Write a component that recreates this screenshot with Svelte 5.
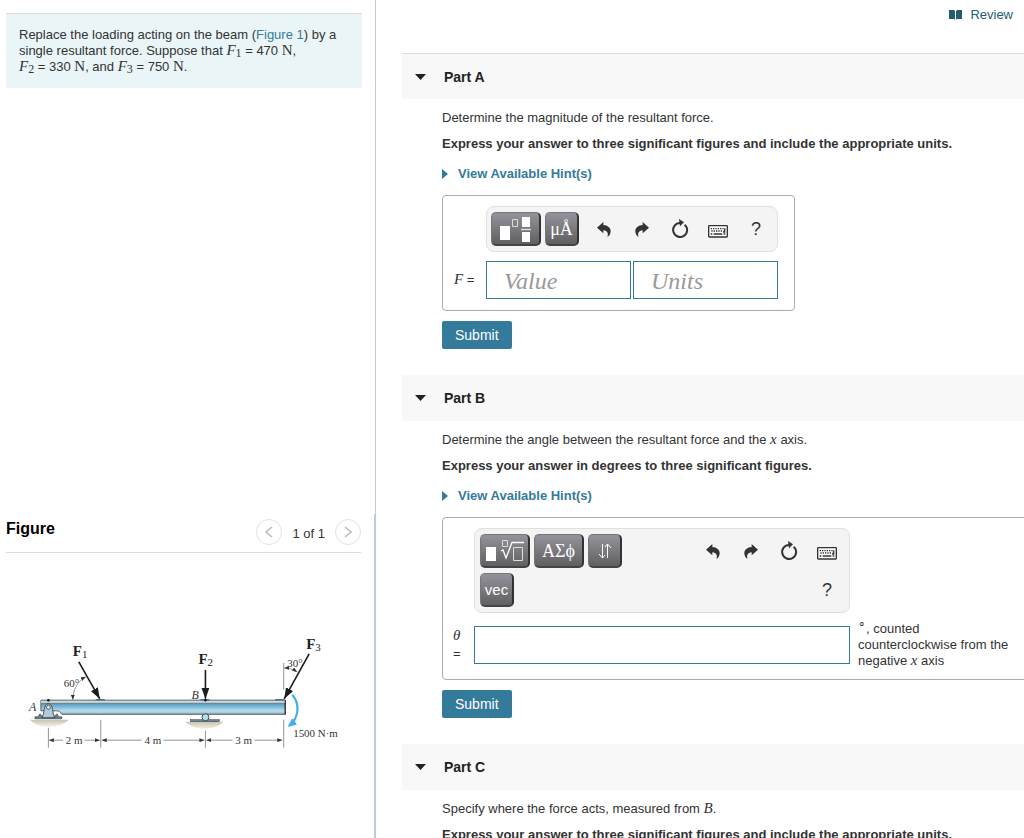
<script lang="ts">
	let value = $state('');
	let units = $state('');
	let theta = $state('');

	let open = $state({ a: true, b: true, c: true });

	type PartKey = 'a' | 'b' | 'c';
</script>

{#snippet undoIcon()}
	<svg width="14" height="15" viewBox="0 0 42 45" aria-hidden="true">
		<path d="M0 17 19 0V9C32 10 41 17 41 28C41 36 37 42 31 45C35 35 32 26 19 25V34Z" fill="#333" />
	</svg>
{/snippet}

{#snippet redoIcon()}
	<svg width="14" height="15" viewBox="0 0 42 45" aria-hidden="true">
		<path d="M42 17 23 0V9C10 10 1 17 1 28C1 36 5 42 11 45C7 35 10 26 23 25V34Z" fill="#333" />
	</svg>
{/snippet}

{#snippet resetIcon()}
	<svg width="18" height="20" viewBox="0 0 54 60" aria-hidden="true">
		<path d="M41 17A21 21 0 1 1 28 12" fill="none" stroke="#333" stroke-width="6" />
		<path d="M24 0 39 10 27 22Z" fill="#333" />
	</svg>
{/snippet}

{#snippet keyboardIcon()}
	<svg width="20" height="13" viewBox="0 0 60 39" aria-hidden="true">
		<rect x="2" y="2" width="56" height="34" rx="2" fill="#fff" stroke="#333" stroke-width="4" />
		<path d="M8 11H52M10 18H46" stroke="#333" stroke-width="4" stroke-dasharray="4 3" />
		<path d="M8 27H13M17 27H43M47 27H52M50 11V21H45" stroke="#333" stroke-width="4" fill="none" />
	</svg>
{/snippet}

{#snippet editIcons()}
	<div class="edit-icons">
		<button class="icon" aria-label="Undo">{@render undoIcon()}</button>
		<button class="icon" aria-label="Redo">{@render redoIcon()}</button>
		<button class="icon" aria-label="Reset">{@render resetIcon()}</button>
		<button class="icon low" aria-label="Keyboard shortcuts">{@render keyboardIcon()}</button>
		<button class="icon help">?</button>
	</div>
{/snippet}

{#snippet partHeader(key: PartKey, title: string)}
	<h2>
		<button class="part-toggle" aria-expanded={open[key]} onclick={() => (open[key] = !open[key])}>
			<svg class:closed={!open[key]} width="11" height="6" viewBox="0 0 11 6" aria-hidden="true">
				<path d="M0 0H11L5.500 6Z" fill="#222" />
			</svg>
			{title}
		</button>
	</h2>
{/snippet}

{#snippet hints()}
	<button class="hints">
		<svg width="6" height="10" viewBox="0 0 6 10" aria-hidden="true">
			<path d="M0 0 6 5 0 10Z" fill="#347a9b" />
		</svg>
		View Available Hint(s)
	</button>
{/snippet}

{#snippet force(index: number, newtons: number)}
	<span class="formula"><span class="math"><i>F</i><sub>{index}</sub></span> = {newtons} <span class="math">N</span></span>
{/snippet}

<div class="page">
	<aside>
		<section class="problem">
			<div class="prompt">
				Replace the loading acting on the beam (<a href="#figure">Figure 1</a>) by a single resultant
				force. Suppose that {@render force(1, 470)}, {@render force(2, 330)}, and {@render force(3, 750)}.
			</div>
		</section>

		<section class="figure" id="figure">
			<header>
				<h3>Figure</h3>
				<nav>
					<button aria-label="Previous figure">
						<svg width="8" height="12" viewBox="0 0 8 12"><path d="M7 1 1 6 7 11" /></svg>
					</button>
					<span>1 of 1</span>
					<button aria-label="Next figure">
						<svg width="8" height="12" viewBox="0 0 8 12"><path d="M1 1 7 6 1 11" /></svg>
					</button>
				</nav>
			</header>

			<svg class="beam" viewBox="0 0 356 130" role="img" aria-label="Beam with three loads">
				<defs>
					<linearGradient id="steel" x1="0" y1="0" x2="0" y2="1">
						<stop offset="0" stop-color="#3d87ae" />
						<stop offset="0.3" stop-color="#5ea3c6" />
						<stop offset="0.75" stop-color="#b9dced" />
						<stop offset="1" stop-color="#8fb9cc" />
					</linearGradient>
					<linearGradient id="ground" x1="0" y1="0" x2="0" y2="1">
						<stop offset="0" stop-color="#c9c3ae" />
						<stop offset="1" stop-color="#f3f0e7" />
					</linearGradient>
					<marker id="load" markerUnits="userSpaceOnUse" markerWidth="12" markerHeight="8" refX="11" refY="4" orient="auto">
						<path d="M0 0 11 4 0 8Z" fill="#1c1c1c" />
					</marker>
					<marker id="dim" markerUnits="userSpaceOnUse" markerWidth="5" markerHeight="4" refX="5" refY="2" orient="auto-start-reverse">
						<path d="M0 0 5 2 0 4Z" fill="#333" />
					</marker>
					<marker id="turn" markerUnits="userSpaceOnUse" markerWidth="9" markerHeight="8" refX="7" refY="4" orient="auto">
						<path d="M0 0 9 4 0 8Z" fill="#45aeee" />
					</marker>
				</defs>

				<!-- supports -->
				<path d="M24 90H63C59 94 52 97 42 97C33 97 28 94 24 90Z" fill="url(#ground)" />
				<path d="M180 92H218C214 96 208 99 199 99C190 99 184 96 180 92Z" fill="url(#ground)" />
				<rect x="185" y="90" width="29" height="2" fill="#6b8795" stroke="#333" stroke-width="0.5" />

				<!-- beam -->
				<path d="M35 70.500H280V84.500H56C54 81 52 81 48 81H35Z" fill="url(#steel)" stroke="#555" stroke-width="1" />
				<path d="M35 70.500H280V73.500H35Z" fill="#cfdadd" />
				<path d="M35 70.500H280M35 73.500H280" stroke="#5c6b70" stroke-width="0.7" />
				<path d="M280 70V85" stroke="#222" />
				<path d="M90 70H99M195 70H204M270 70H279" stroke="#4d7488" stroke-width="1.5" />
				<circle cx="42.5" cy="70.5" r="1.3" fill="#111" />
				<circle cx="200" cy="70.5" r="1.3" fill="#111" />

				<path d="M29 89V87H32L34 84 37 87H48L51 84 53 87H56V89Z" fill="#5d7f90" stroke="#333" stroke-width="0.5" />
				<path d="M36 88C39 84 37 74 42.500 74C48 74 46 84 49 88Z" fill="#aecbdc" stroke="#333" stroke-width="0.8" />
				<circle cx="42.500" cy="77.500" r="2" fill="#dbe8ee" stroke="#333" stroke-width="0.7" />
				<circle cx="200" cy="87.500" r="3.500" fill="#b9dbea" stroke="#2f5263" />

				<!-- loads -->
				<g stroke="#1c1c1c" stroke-width="1.6" marker-end="url(#load)">
					<path d="M73 32 94 69" />
					<path d="M200 40V69" />
					<path d="M304 24 279 69" />
				</g>
				<path d="M287 65C295 74 294 88 284 96" fill="none" stroke="#45aeee" stroke-width="2.200" marker-end="url(#turn)" />

				<!-- angles and dimensions -->
				<g fill="none" stroke="#666" stroke-width="0.7">
					<path d="M67 70C67 60 72 51 80 47" marker-start="url(#dim)" marker-end="url(#dim)" />
					<path d="M279 38Q286 38 292 42" marker-start="url(#dim)" marker-end="url(#dim)" />
					<path d="M278.500 33V60M42.500 98V118M95 90V118M200 101V118M278.500 90V118" />
					<path d="M57 110.500H43" marker-end="url(#dim)" />
					<path d="M79 110.500H94" marker-end="url(#dim)" />
					<path d="M136 110.500H96" marker-end="url(#dim)" />
					<path d="M158 110.500H199" marker-end="url(#dim)" />
					<path d="M227 110.500H201" marker-end="url(#dim)" />
					<path d="M249 110.500H277" marker-end="url(#dim)" />
				</g>

				<g class="force">
					<text x="67" y="26">F<tspan class="index" dy="2">1</tspan></text>
					<text x="193" y="34">F<tspan class="index" dy="2">2</tspan></text>
					<text x="301" y="19">F<tspan class="index" dy="2">3</tspan></text>
				</g>
				<g class="note">
					<text x="58" y="57">60°</text>
					<text x="282" y="37">30°</text>
					<text x="60" y="114">2 m</text>
					<text x="139" y="114">4 m</text>
					<text x="230" y="114">3 m</text>
					<text x="288" y="107">1500 N·m</text>
					<text class="point" x="23" y="81">A</text>
					<text class="point" x="186" y="69">B</text>
				</g>
			</svg>
		</section>
	</aside>

	<main>
		<div class="top">
			<a href="#review">
				<svg width="13" height="10" viewBox="0 0 13 10" aria-hidden="true">
					<path d="M0 0H5L6 1V10L5 9H0ZM7 1 8 0H13V9H8L7 10Z" fill="#255c6f" />
				</svg>
				Review
			</a>
		</div>

		<section class="part first">
			{@render partHeader('a', 'Part A')}
			{#if open.a}
				<div class="body">
					<p>Determine the magnitude of the resultant force.</p>
					<p><b>Express your answer to three significant figures and include the appropriate units.</b></p>
					{@render hints()}
					<div class="answer answer-a">
						<div class="toolbar">
							<button class="tool wide" aria-label="Templates">
								<svg width="32" height="26" viewBox="0 0 32 26">
									<path d="M0 10H10V24H0Z M22 1H30V11H22Z M22 16H30V26H22Z" fill="#fff" />
									<path d="M12.500 3.500H17.500V10.500H12.500Z" fill="none" stroke="#ddd" />
									<path d="M21 13.500H31" stroke="#ddd" stroke-width="1.500" />
								</svg>
							</button>
							<button class="tool greek">μÅ</button>
							{@render editIcons()}
						</div>
						<label for="value"><i class="math">F</i> =</label>
						<div class="fields">
							<input id="value" placeholder="Value" bind:value />
							<input aria-label="Units" placeholder="Units" bind:value={units} />
						</div>
					</div>
					<button class="submit">Submit</button>
				</div>
			{/if}
		</section>

		<section class="part">
			{@render partHeader('b', 'Part B')}
			{#if open.b}
				<div class="body">
					<p>Determine the angle between the resultant force and the <i class="math">x</i> axis.</p>
					<p><b>Express your answer in degrees to three significant figures.</b></p>
					{@render hints()}
					<div class="answer answer-b">
						<div class="toolbar">
							<div class="tools">
								<button class="tool wide" aria-label="Radicals">
									<svg width="38" height="24" viewBox="0 0 38 24">
										<path d="M0 8H10V22H0Z" fill="#fff" />
										<path d="M16.500 1.500H21.500V7.500H16.500Z M27.500 8.500H36.500V21.500H27.500Z" fill="none" stroke="#ddd" />
										<path d="M15 12 17 11 20 19 26 3.500H38" fill="none" stroke="#fff" stroke-width="1.300" />
									</svg>
								</button>
								<button class="tool wide greek">ΑΣϕ</button>
								<button class="tool" aria-label="Arrows">
									<svg width="14" height="18" viewBox="0 0 14 18">
										<path d="M4.500 2V16M1 12 4.500 16 7 13M9.500 16V2M7 5 9.500 2 13 6" fill="none" stroke="#fff" />
									</svg>
								</button>
								<button class="tool vec">vec</button>
							</div>
							{@render editIcons()}
						</div>
						<label for="theta"><i class="math">θ</i> =</label>
						<input id="theta" bind:value={theta} />
						<span class="suffix"><sup>∘</sup>, counted<br />counterclockwise from the negative <i class="math">x</i> axis</span>
					</div>
					<button class="submit">Submit</button>
				</div>
			{/if}
		</section>

		<section class="part">
			{@render partHeader('c', 'Part C')}
			{#if open.c}
				<div class="body">
					<p>Specify where the force acts, measured from <i class="math">B</i>.</p>
					<p><b>Express your answer to three significant figures and include the appropriate units.</b></p>
				</div>
			{/if}
		</section>
	</main>
</div>

<style>
	:global(body) {
		margin: 0;
		background: #fff;
	}

	.page {
		display: grid;
		grid-template-columns: 376px minmax(0, 1fr);
		height: 100vh;
		overflow: hidden;
		color: #333;
		font: 13px/16px 'Liberation Sans', Arial, sans-serif;
	}

	button {
		padding: 0;
		border: 0;
		background: none;
		color: inherit;
		font: inherit;
		cursor: pointer;
	}

	svg {
		display: block;
	}

	a {
		color: #347a9b;
		text-decoration: none;
	}

	.formula {
		white-space: nowrap;
	}

	.math {
		font-family: 'Liberation Serif', 'Times New Roman', serif;
		font-size: 15px;
		line-height: 1px;
	}

	sub,
	sup {
		font-size: 12px;
		line-height: 1px;
	}

	sub {
		vertical-align: -2px;
	}

	aside {
		display: grid;
		grid-template-rows: 514fr 324fr;
		min-height: 0;
	}

	.problem {
		padding: 13px 13px 0 6px;
		border-right: 1px solid #c3ccd6;
	}

	.prompt {
		padding: 13px;
		border-top: 1px solid #ddd;
		background: #eaf5f7;
	}

	.figure {
		padding: 0 13px 0 6px;
		border-right: 2px solid #bccbdf;
	}

	.figure header {
		display: flex;
		justify-content: space-between;
		padding: 5px 0 7px;
		border-bottom: 1px solid #ddd;
	}

	h3 {
		margin: 0;
		color: #000;
		font-size: 16px;
		line-height: 20px;
	}

	.figure nav {
		display: flex;
		align-items: center;
		gap: 10px;
	}

	.figure nav span {
		padding-top: 4px;
	}

	.figure nav button {
		display: grid;
		place-items: center;
		box-sizing: border-box;
		width: 26px;
		height: 26px;
		border: 1px solid #e2e2e2;
		border-radius: 50%;
	}

	.figure nav path {
		fill: none;
		stroke: #bbb;
		stroke-width: 1.5;
	}

	.beam {
		width: 100%;
		margin-top: 77px;
	}

	.beam text {
		font-family: 'Liberation Serif', 'Times New Roman', serif;
		fill: #333;
	}

	.beam .force text {
		font-size: 15px;
		font-weight: bold;
		fill: #222;
	}

	.beam .index {
		font-size: 11px;
		font-weight: normal;
	}

	.beam .note text {
		font-size: 11px;
	}

	.beam .note .point {
		font-size: 12px;
		font-style: italic;
	}

	main {
		padding-left: 26px;
		overflow: hidden auto;
		scrollbar-width: none;
	}

	.top {
		display: flex;
		justify-content: flex-end;
		height: 46px;
		padding: 7px 11px 0 0;
	}

	.top a {
		display: flex;
		align-items: center;
		gap: 8px;
		height: 16px;
		color: #255c6f;
	}

	h2 {
		display: flex;
		box-sizing: border-box;
		height: 46px;
		margin: 0;
		background: #f8f8f8;
		color: #222;
		font-size: 14px;
	}

	.first h2 {
		border-top: 1px solid #ddd;
	}

	.part-toggle {
		display: flex;
		flex: 1;
		align-items: center;
		gap: 18px;
		padding-left: 13px;
	}

	.closed {
		transform: rotate(-90deg);
	}

	.body {
		padding: 11px 0 26px 40px;
	}

	p {
		margin: 0 0 10px;
	}

	.hints {
		display: flex;
		align-items: center;
		gap: 10px;
		margin: 14px 0 13px;
		color: #347a9b;
		font-weight: bold;
	}

	.answer {
		display: grid;
		align-items: center;
		box-sizing: border-box;
		border: 1px solid #aaa;
		border-radius: 4px;
	}

	.answer-a {
		grid-template-columns: 32px 292px;
		row-gap: 9px;
		width: 353px;
		padding: 10px 0 11px 11px;
	}

	.answer-b {
		grid-template-columns: 21px 376px 168px;
		row-gap: 8px;
		width: 620px;
		padding: 10px;
	}

	.toolbar {
		grid-column: 2 / 3;
	}

	.answer label {
		grid-column: 1;
		line-height: 18px;
	}

	.answer-b label {
		padding-right: 8px;
	}

	.toolbar {
		display: flex;
		justify-content: space-between;
		gap: 4px;
		box-sizing: border-box;
		padding: 5px 4px;
		border: 1px solid #e0e0e0;
		border-radius: 8px;
		background: #f4f4f4;
	}

	.tools {
		display: flex;
		flex-wrap: wrap;
		gap: 5px 4px;
		width: 152px;
	}

	.tool {
		display: grid;
		place-items: center;
		box-sizing: border-box;
		width: 34px;
		height: 34px;
		border: 1px solid #555;
		border-width: 1px 2px 2px 1px;
		border-color: #77777b #333 #444 #77777b;
		border-radius: 5px;
		background: linear-gradient(#93939b, #606062);
		color: #fff;
	}

	.wide {
		width: 50px;
	}

	.greek {
		font-family: 'Liberation Serif', 'Times New Roman', serif;
		font-size: 18px;
	}

	.vec {
		font-size: 15px;
	}

	.edit-icons {
		display: flex;
		flex-wrap: wrap;
		justify-content: flex-end;
		gap: 5px 4px;
		margin-left: auto;
	}

	.answer-b .toolbar {
		padding: 5px;
	}

	.answer-b .edit-icons {
		width: 152px;
	}

	.icon {
		display: grid;
		place-items: center;
		width: 34px;
		height: 34px;
	}

	.low {
		padding-top: 4px;
	}

	.help {
		font-size: 18px;
	}

	.fields {
		display: grid;
		grid-template-columns: 1fr 1fr;
		gap: 2px;
	}

	input {
		box-sizing: border-box;
		width: 100%;
		height: 38px;
		padding: 2px 17px 0;
		border: 1px solid #347a9b;
		background: #fff;
		font: 24px 'Liberation Serif', 'Times New Roman', serif;
	}

	input::placeholder {
		color: #999;
		font-style: italic;
		opacity: 1;
	}

	.suffix {
		padding-left: 8px;
	}

	.submit {
		display: block;
		height: 28px;
		margin-top: 10px;
		padding: 0 13px;
		border-radius: 2px;
		background: #347a9b;
		color: #fff;
		font-size: 14px;
	}
</style>
